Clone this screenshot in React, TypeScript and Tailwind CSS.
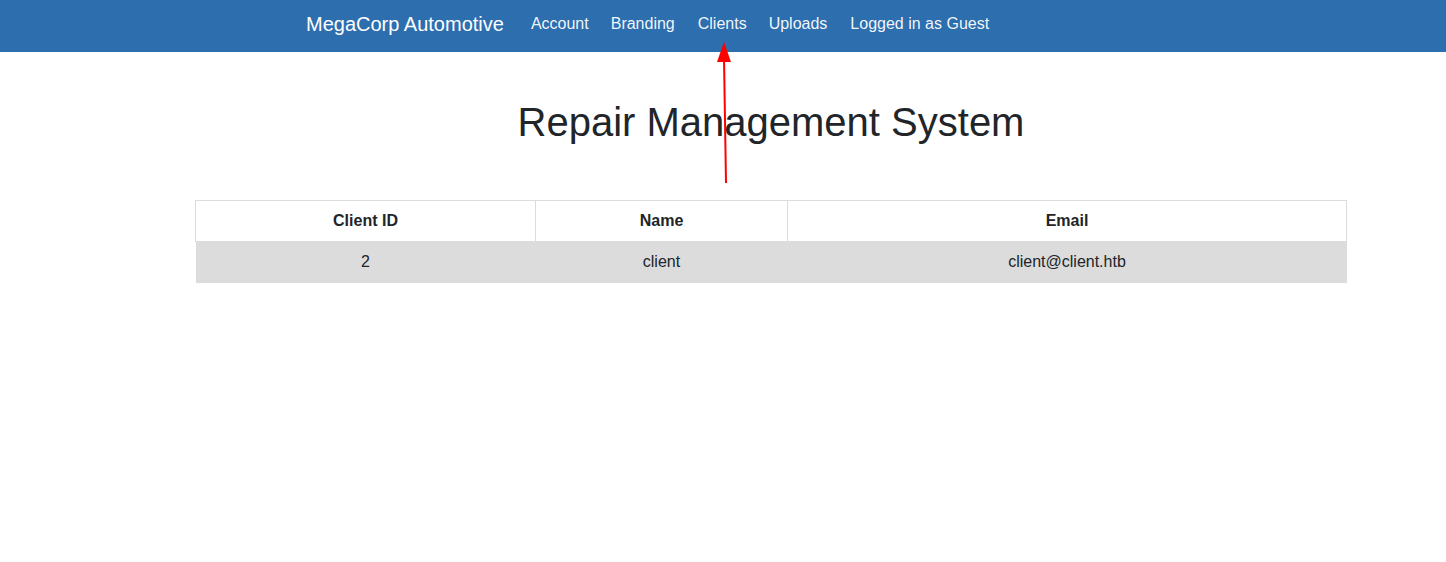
import React from "react";

export default function App() {
  return (
    <div className="relative min-h-[562px] bg-white text-[#212529]" style={{ fontFamily: '"Liberation Sans", Arial, sans-serif' }}>
      <nav className="h-[52px] bg-[#2d6eae] flex items-center pl-[306px] pb-[4px]">
        <span className="text-[20px] text-white leading-none mr-[16px]">MegaCorp Automotive</span>
        <ul className="flex items-center text-[16px] text-white/95 leading-none">
          <li className="px-[11px]">Account</li>
          <li className="px-[11px] mr-[1px]">Branding</li>
          <li className="px-[11px]">Clients</li>
          <li className="px-[11px] mr-[1px]">Uploads</li>
          <li className="px-[11px]">Logged in as Guest</li>
        </ul>
      </nav>
      <div className="ml-[195px] w-[1152px]">
        <h1 className="mt-[46px] text-center text-[40px] leading-[1.2] font-normal">Repair Management System</h1>
        <table className="mt-[54px] w-full border-collapse text-[16px]">
          <thead>
            <tr className="h-[41px]">
              <th className="w-[340px] border border-[#dcdcdc] font-bold">Client ID</th>
              <th className="w-[252px] border border-[#dcdcdc] font-bold">Name</th>
              <th className="border border-[#dcdcdc] font-bold">Email</th>
            </tr>
          </thead>
          <tbody>
            <tr className="h-[41px] bg-[#dcdcdc]">
              <td className="text-center">2</td>
              <td className="text-center">client</td>
              <td className="text-center">client@client.htb</td>
            </tr>
          </tbody>
        </table>
      </div>
      <svg className="absolute left-0 top-0 pointer-events-none" width="1446" height="562">
        <line x1="726" y1="183" x2="724" y2="58" stroke="#ff0000" strokeWidth="2" />
        <polygon points="724,42 717,62 731,62" fill="#ff0000" />
      </svg>
    </div>
  );
}
